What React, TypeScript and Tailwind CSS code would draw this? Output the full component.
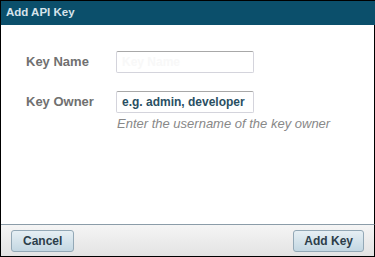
import React from "react";

export default function App() {
  const font = { fontFamily: '"Liberation Sans", Arial, sans-serif' };
  return (
    <div
      className="w-[375px] h-[257px] bg-white flex flex-col border-t border-l border-b border-black overflow-hidden"
      style={font}
    >
      <div className="h-[24px] shrink-0 bg-[#0b4f6b] flex items-center pl-[5px]">
        <span className="text-[11.5px] font-bold text-[#d6e3eb] leading-none">Add API Key</span>
      </div>
      <div className="flex-1 border-r border-black flex flex-col pl-[25px] pt-[26px]">
        <div className="flex items-center h-[22px]">
          <div className="w-[90px] text-[13px] font-bold text-[#707070]">Key Name</div>
          <div className="w-[138px] h-[22px] border border-[#d4d4dc] border-t-[#a8a8a8] rounded-[2px] flex items-center pl-[5px]">
            <span className="text-[12px] font-bold text-[#f8f8f8]">Key Name</span>
          </div>
        </div>
        <div className="flex items-center h-[22px] mt-[18px]">
          <div className="w-[90px] text-[13px] font-bold text-[#707070]">Key Owner</div>
          <div className="w-[138px] h-[22px] border border-[#d4d4dc] border-t-[#a8a8a8] rounded-[2px] flex items-center pl-[5px]">
            <span className="text-[12px] font-bold text-[#2a4f63] whitespace-nowrap">e.g. admin, developer</span>
          </div>
        </div>
        <div className="pl-[91px] mt-[3px] text-[13px] italic text-[#888888] leading-[15px] whitespace-nowrap">
          Enter the username of the key owner
        </div>
      </div>
      <div className="h-[32px] shrink-0 border-t border-r border-t-[#8b9ca8] border-r-black bg-gradient-to-b from-[#f5f5f5] to-[#e3e3e3] flex items-start justify-between pl-[10px] pr-[10px] pt-[5px]">
        <button className="h-[22px] px-[11px] rounded-[3px] border border-[#93a8b6] bg-gradient-to-b from-[#e6eff4] to-[#c3d7e2] text-[12px] font-bold text-[#2c3e4a] leading-none">
          Cancel
        </button>
        <button className="h-[22px] px-[10px] rounded-[3px] border border-[#93a8b6] bg-gradient-to-b from-[#e6eff4] to-[#c3d7e2] text-[12px] font-bold text-[#2c3e4a] leading-none">
          Add Key
        </button>
      </div>
    </div>
  );
}
